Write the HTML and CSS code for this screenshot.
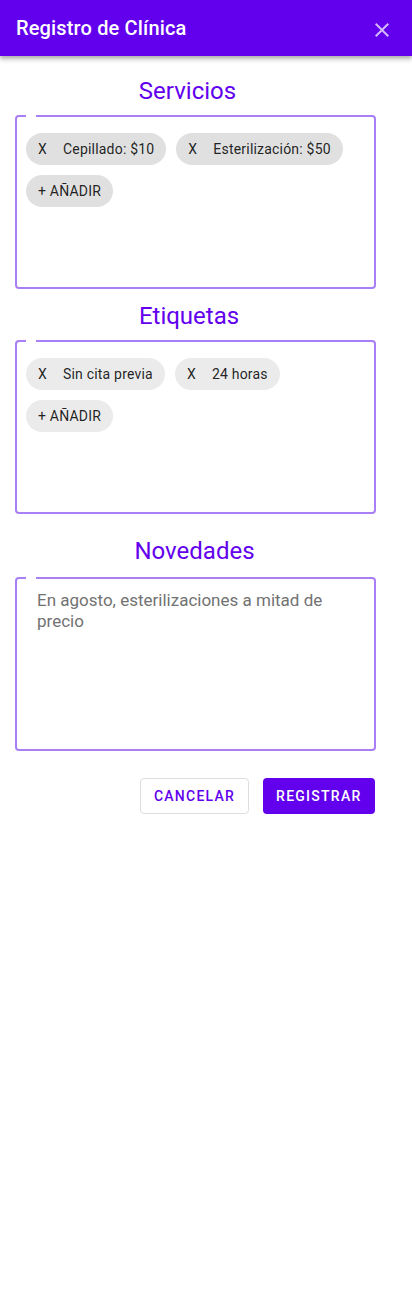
FILE: index.html
```html
<!DOCTYPE html>
<html lang="es">
<head>
<meta charset="utf-8">
<title>Registro de Clínica</title>
<link rel="stylesheet" href="styles.css">
</head>
<body>
<header class="topbar">
  <h1 class="topbar-title">Registro de Clínica</h1>
  <button class="close-btn" aria-label="Cerrar">
    <svg viewBox="0 0 24 24" width="24" height="24"><path d="M19 6.41 17.59 5 12 10.59 6.41 5 5 6.41 10.59 12 5 17.59 6.41 19 12 13.41 17.59 19 19 17.59 13.41 12z" fill="currentColor"/></svg>
  </button>
</header>
<main class="content">
  <h2 class="section-title title-servicios">Servicios</h2>
  <fieldset class="box">
    <legend class="notch"></legend>
    <div class="chips">
      <span class="chip chip-dark"><span class="chip-x">X</span>Cepillado: $10</span>
      <span class="chip chip-dark"><span class="chip-x">X</span>Esterilización: $50</span>
      <span class="chip chip-dark">+ AÑADIR</span>
    </div>
  </fieldset>

  <h2 class="section-title title-etiquetas">Etiquetas</h2>
  <fieldset class="box">
    <legend class="notch"></legend>
    <div class="chips">
      <span class="chip chip-light"><span class="chip-x">X</span>Sin cita previa</span>
      <span class="chip chip-light"><span class="chip-x">X</span>24 horas</span>
      <span class="chip chip-light">+ AÑADIR</span>
    </div>
  </fieldset>

  <h2 class="section-title title-novedades">Novedades</h2>
  <fieldset class="box">
    <legend class="notch"></legend>
    <p class="news-text">En agosto, esterilizaciones a mitad de precio</p>
  </fieldset>

  <div class="actions">
    <button class="btn btn-outline">Cancelar</button>
    <button class="btn btn-primary">Registrar</button>
  </div>
</main>
</body>
</html>
```
FILE: styles.css
```css
* { box-sizing: border-box; }

body {
  margin: 0;
  font-family: Roboto, "Liberation Sans", sans-serif;
  background: #ffffff;
  color: rgba(0, 0, 0, 0.87);
}

.topbar {
  height: 56px;
  background: #6200ee;
  display: flex;
  align-items: center;
  justify-content: space-between;
  padding: 0 18px 0 16px;
  box-shadow: 0 2px 4px rgba(0, 0, 0, 0.25), 0 4px 5px rgba(0, 0, 0, 0.12);
  position: relative;
}

.topbar-title {
  margin: 0;
  font-size: 20px;
  font-weight: 500;
  color: #ffffff;
  letter-spacing: 0.15px;
}

.close-btn {
  border: 0;
  background: none;
  padding: 0;
  width: 24px;
  height: 24px;
  margin-top: 4px;
  color: rgba(255, 255, 255, 0.72);
  display: flex;
}

.content {
  width: 361px;
  margin-left: 15px;
  padding-top: 19px;
}

.section-title {
  margin: 0;
  font-size: 24px;
  font-weight: 400;
  line-height: 32px;
  color: #6200ee;
  text-align: center;
}

.title-servicios { padding-right: 16px; margin-bottom: 8px; }
.title-etiquetas { padding-right: 13px; margin-top: 11px; margin-bottom: 8px; }
.title-novedades { margin-top: 21px; margin-bottom: 10px; padding-right: 2px; }

.box {
  margin: 0;
  min-width: 0;
  height: 174px;
  border: 2px solid #a97ff6;
  border-radius: 4px;
  padding: 0 9px;
}

.notch {
  padding: 0 5px;
  height: 2px;
  font-size: 0;
  line-height: 0;
  margin-left: 0;
}

.chips {
  display: flex;
  flex-wrap: wrap;
  gap: 10px;
  padding-top: 16px;
}

.chip {
  display: inline-flex;
  align-items: center;
  height: 32px;
  padding: 0 12px;
  border-radius: 16px;
  font-size: 14px;
  letter-spacing: 0.2px;
  color: rgba(0, 0, 0, 0.87);
  white-space: nowrap;
}

.chip-dark { background: #e0e0e0; }
.chip-light { background: #ebebeb; }

.chip-x {
  margin-right: 16px;
}

.news-text {
  margin: 0;
  padding: 11px 8px 0 11px;
  font-size: 17px;
  line-height: 21px;
  color: #727272;
}

.actions {
  display: flex;
  justify-content: flex-end;
  gap: 14px;
  margin-top: 27px;
  padding-right: 1px;
}

.btn {
  height: 36px;
  padding: 0 12.5px;
  border-radius: 4px;
  font-family: Roboto, "Liberation Sans", sans-serif;
  font-size: 14px;
  font-weight: 500;
  letter-spacing: 1.25px;
  text-transform: uppercase;
  cursor: pointer;
}

.btn-outline {
  background: #ffffff;
  border: 1px solid #dedede;
  color: #6200ee;
}

.btn-primary {
  padding: 0 13.5px;
  background: #6200ee;
  border: 0;
  color: #ffffff;
}
```
